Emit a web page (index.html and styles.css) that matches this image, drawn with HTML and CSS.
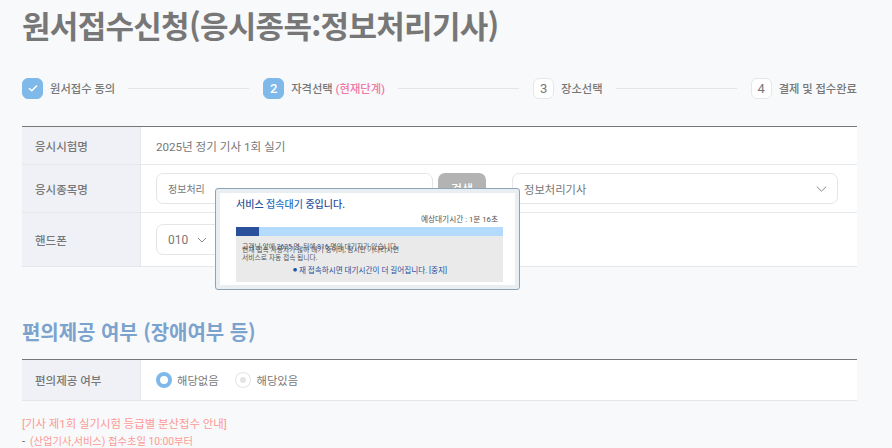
FILE: index.html
```html
<!DOCTYPE html>
<html lang="ko">
<head>
<meta charset="utf-8">
<title>원서접수신청</title>
<link rel="stylesheet" href="styles.css">
</head>
<body>
<main class="page">
  <h1 class="title">원서접수신청(응시종목:정보처리기사)</h1>
  <ol class="steps">
    <li class="step done"><span class="num"><svg width="12" height="10" viewBox="0 0 12 10"><path d="M2 5.2 4.8 7.8 10 2.4" fill="none" stroke="#fff" stroke-width="1.5"/></svg></span><span class="step-label">원서접수 동의</span></li>
    <li class="line"></li>
    <li class="step done"><span class="num">2</span><span class="step-label">자격선택 <em>(현재단계)</em></span></li>
    <li class="line"></li>
    <li class="step"><span class="num">3</span><span class="step-label">장소선택</span></li>
    <li class="line"></li>
    <li class="step"><span class="num">4</span><span class="step-label">결제 및 접수완료</span></li>
  </ol>
  <section class="table">
    <div class="row r1"><div class="th">응시시험명</div><div class="td">2025년 정기 기사 1회 실기</div></div>
    <div class="row r2"><div class="th">응시종목명</div><div class="td">
      <div class="field search-input">정보처리</div>
      <button class="search-btn">검색</button>
      <div class="field select-wide">정보처리기사<svg class="chev" width="11" height="6" viewBox="0 0 11 6"><path d="M.8.6 5.5 5.2 10.2.6" fill="none" stroke="#888" stroke-width="1"/></svg></div>
    </div></div>
    <div class="row r3"><div class="th">핸드폰</div><div class="td">
      <div class="field select-phone">010<svg class="chev" width="10" height="6" viewBox="0 0 10 6"><path d="M1 1 5 5 9 1" fill="none" stroke="#888" stroke-width="1"/></svg></div>
    </div></div>
  </section>
  <h2 class="subtitle">편의제공 여부 (장애여부 등)</h2>
  <section class="table">
    <div class="row r4"><div class="th">편의제공 여부</div><div class="td radios">
      <span class="radio on"></span><span class="radio-label">해당없음</span>
      <span class="radio off"></span><span class="radio-label">해당있음</span>
    </div></div>
  </section>
  <div class="notes">
    <p class="note-head">[기사 제1회 실기시험 등급별 분산접수 안내]</p>
    <p class="note-line"><span class="dash">-</span> <span class="note-red">(산업기사,서비스) 접수초일 10:00부터</span></p>
  </div>
</main>
<aside class="modal">
  <div class="modal-inner">
    <h3 class="modal-title"><span class="navy">서비스</span> <span class="blue">접속대기</span> <span class="navy">중입니다.</span></h3>
    <p class="eta">예상대기시간 : 1분 16초</p>
    <div class="bar"><div class="bar-fill"></div></div>
    <div class="info">
      <p class="info-a">고객님 앞에 <b>2625</b> 명, 뒤에 <b>816</b> 명의 대기자가 있습니다.</p>
      <p class="info-b">현재 접속 사용자가 많아 대기 중이며, 잠시만 기다리시면<br>서비스로 자동 접속 됩니다.</p>
      <p class="info-c"><span class="dot">●</span> 재 접속하시면 대기시간이 더 길어집니다. [중지]</p>
    </div>
  </div>
</aside>
</body>
</html>
```
FILE: styles.css
```css
* { box-sizing: border-box; }
html, body { margin: 0; padding: 0; }
body {
  width: 892px; height: 448px; overflow: hidden; position: relative;
  background: #f8f9fb; color: #777;
  font-family: Roboto, "Noto Sans CJK KR", sans-serif;
  font-size: 12px;
}
.page { padding: 0 35px 0 22px; }
.title { margin: 0; padding-top: 4px; height: 60px; font-size: 31px; line-height: 42px; font-weight: 700; color: #777; letter-spacing: -0.7px; font-family: "Noto Sans CJK KR", sans-serif; }
.steps { list-style: none; margin: 0; padding: 0; display: flex; align-items: center; height: 40px; margin-top: 8px; margin-bottom: 18px; }
.step { display: flex; align-items: center; gap: 7px; font-weight: 500; color: #777; font-size: 11.3px; white-space: nowrap; }
.num { width: 21px; height: 21px; border-radius: 6px; display: flex; align-items: center; justify-content: center; background: #fff; border: 1px solid #e5e7ea; font-size: 13px; font-weight: 400; color: #777; }
.done .num { background: #7eb9ea; border-color: #7eb9ea; color: #fff; font-weight: 500; }
.step em { font-style: normal; color: #ee7aa5; }
.line { flex: 1; height: 1px; background: #e3e5e8; margin: 0 14px 0 13px; }
.table { border-top: 1px solid #777; background: #fff; }
.row { display: flex; border-bottom: 1px solid #e6e7ea; }
.r1 { height: 38px; } .r2 { height: 48px; } .r3 { height: 54px; } .r4 { height: 41px; }
.th { width: 119px; flex: none; background: #eff1f6; border-right: 1px solid #e6e7ea; padding-left: 13px; display: flex; align-items: center; font-weight: 500; font-size: 11.5px; color: #777; }
.td { flex: 1; display: flex; align-items: center; padding-left: 15px; font-size: 11.6px; color: #777; }
.field { height: 31px; background: #fff; border: 1px solid #e4e5e8; border-radius: 7px; display: flex; align-items: center; padding-left: 11px; position: relative; }
.search-input { width: 277px; font-size: 10px; }
.search-btn { width: 48px; height: 31px; margin-left: 5px; border: 0; border-radius: 7px; background: #b3b3b3; color: #fff; font: 500 12px "Noto Sans CJK KR", sans-serif; }
.select-wide { width: 326px; margin-left: 26px; font-size: 11.3px; }
.select-phone { width: 100px; font-size: 12px; }
.chev { margin-left: auto; margin-right: 10px; }
.select-phone .chev { margin-left: 9px; }
.subtitle { margin: 50px 0 0; height: 42px; font-size: 20px; line-height: 30px; font-weight: 700; color: #7ba3cd; letter-spacing: -0.05px; font-family: "Noto Sans CJK KR", sans-serif; }
.radio { width: 16px; height: 16px; border-radius: 50%; display: block; }
.radio.on { background: #fff; border: 4.5px solid #7eb9ea; }
.radio.off { background: #e4e4e4; border: 4px solid #fff; box-shadow: 0 0 0 1px #e4e5e8; margin-left: 17px; width: 14px; height: 14px; }
.radio-label { margin-left: 5px; font-size: 11.3px; }
.radio.off + .radio-label { margin-left: 7px; }
.notes { margin-top: 15px; font-size: 11.4px; line-height: 17px; }
.notes p { margin: 0; }
.note-head, .note-red { color: #fd9a96; }
.note-red { font-size: 10.3px; margin-left: 2px; }
.dash { color: #666; }
.modal { position: absolute; left: 215px; top: 188px; width: 305px; height: 102px; background: #e9eef2; border: 1px solid #8ea4b6; border-radius: 3px; padding: 4px; }
.modal-inner { background: #fff; height: 100%; padding: 4px 12px 0 16px; position: relative; }
.modal-title { margin: 0; font-size: 10px; line-height: 16px; font-weight: 500; }
.navy { color: #2a4f9b; } .blue { color: #2a70c0; }
.eta { margin: 1px 0 0; text-align: right; font-size: 7.7px; line-height: 12px; color: #555; padding-right: 5px; }
.bar { height: 9px; background: #b4dbfd; margin-top: 1px; }
.bar-fill { width: 23px; height: 100%; background: #2a4f9b; }
.info { height: 46px; background: #eaeaea; position: relative; font-size: 6.8px; line-height: 8px; color: #555; }
.info p { margin: 0; position: absolute; left: 6px; }
.info b { font-weight: 400; color: #2a4f9b; }
.info-a { top: 7px; } .info-b { top: 10px; }
.info-c { top: 29px; left: 57px !important; font-size: 7.6px; color: #2a4f9b; white-space: nowrap; line-height: 12px; }
.dot { font-size: 4px; vertical-align: 1px; }
```
